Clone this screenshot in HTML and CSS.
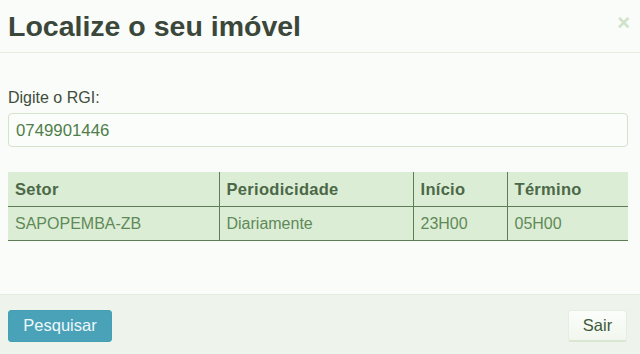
FILE: index.html
```html
<!DOCTYPE html>
<html lang="pt">
<head>
<meta charset="utf-8">
<link rel="stylesheet" href="styles.css">
</head>
<body>
<div class="modal">
  <header class="modal-header">
    <h1 class="title">Localize o seu imóvel</h1>
    <span class="close">×</span>
  </header>
  <main class="modal-body">
    <label class="label" for="rgi">Digite o RGI:</label>
    <input class="input" id="rgi" type="text" value="0749901446">
    <table class="result">
      <thead>
        <tr><th class="c1">Setor</th><th class="c2">Periodicidade</th><th class="c3">Início</th><th class="c4">Término</th></tr>
      </thead>
      <tbody>
        <tr><td>SAPOPEMBA-ZB</td><td>Diariamente</td><td>23H00</td><td>05H00</td></tr>
      </tbody>
    </table>
  </main>
  <footer class="modal-footer">
    <button class="btn btn-primary">Pesquisar</button>
    <button class="btn btn-default">Sair</button>
  </footer>
</div>
</body>
</html>
```
FILE: styles.css
```css
html, body {
  margin: 0;
  padding: 0;
}
body {
  width: 640px;
  height: 354px;
  overflow: hidden;
  background: #f9fcf8;
  font-family: "Liberation Sans", Arial, sans-serif;
}
.modal {
  display: flex;
  flex-direction: column;
  height: 354px;
}
.modal-header {
  height: 53px;
  border-bottom: 1px solid #e6eee2;
  display: flex;
  align-items: center;
  justify-content: space-between;
  padding: 0 10px 0 8px;
  box-sizing: border-box;
}
.title {
  margin: 0;
  font-size: 28.5px;
  font-weight: bold;
  color: #3b473a;
  position: relative;
  top: 0;
}
.close {
  color: #cfe3c8;
  font-size: 22px;
  font-weight: bold;
  line-height: 1;
  position: relative;
  top: -3px;
}
.modal-body {
  flex: 1;
  padding: 35px 12px 0 8px;
}
.label {
  display: block;
  font-size: 16px;
  color: #3f4d3c;
  margin-bottom: 7px;
  position: relative;
  top: 1px;
}
.input {
  display: block;
  box-sizing: border-box;
  width: 620px;
  height: 34px;
  padding: 1px 7px 0;
  border: 1px solid #d4e3cc;
  border-radius: 4px;
  background: #fbfdfa;
  font-family: inherit;
  font-size: 16.8px;
  color: #4f7d49;
  outline: none;
}
.result {
  margin-top: 25px;
  width: 620px;
  border-collapse: collapse;
  background: #dcedd6;
  font-size: 16px;
}
.result th, .result td {
  text-align: left;
  padding: 2px 7px 0;
  height: 34px;
  box-sizing: border-box;
  border-left: 1px solid #5c7d56;
}
.result th:first-child, .result td:first-child {
  border-left: none;
}
.result th {
  color: #4b6847;
  font-weight: bold;
  font-size: 16.5px;
  letter-spacing: 0.3px;
  border-bottom: 1px solid #5c7d56;
}
.result td {
  color: #5f8a58;
  border-bottom: 1px solid #5c7d56;
}
.c1 { width: 211px; }
.c2 { width: 194px; }
.c3 { width: 94px; }
.modal-footer {
  height: 60px;
  border-top: 1px solid #e3eade;
  background: #eef3ec;
  display: flex;
  align-items: center;
  justify-content: space-between;
  padding: 0 13px 0 8px;
  box-sizing: border-box;
}
.btn {
  font-family: inherit;
  font-size: 16.5px;
  height: 32px;
  border-radius: 3px;
  margin-top: 2px;
  padding: 0;
}
.btn-primary {
  width: 104px;
  background: #4aa2b9;
  border: 1px solid #46a0b4;
  color: #eef8f9;
}
.btn-default {
  width: 59px;
  background: linear-gradient(#fbfdfa, #f1f7ee);
  border: 1px solid #e5efe0;
  border-bottom: 2px solid #d8e6d2;
  color: #3d5a39;
}
```
